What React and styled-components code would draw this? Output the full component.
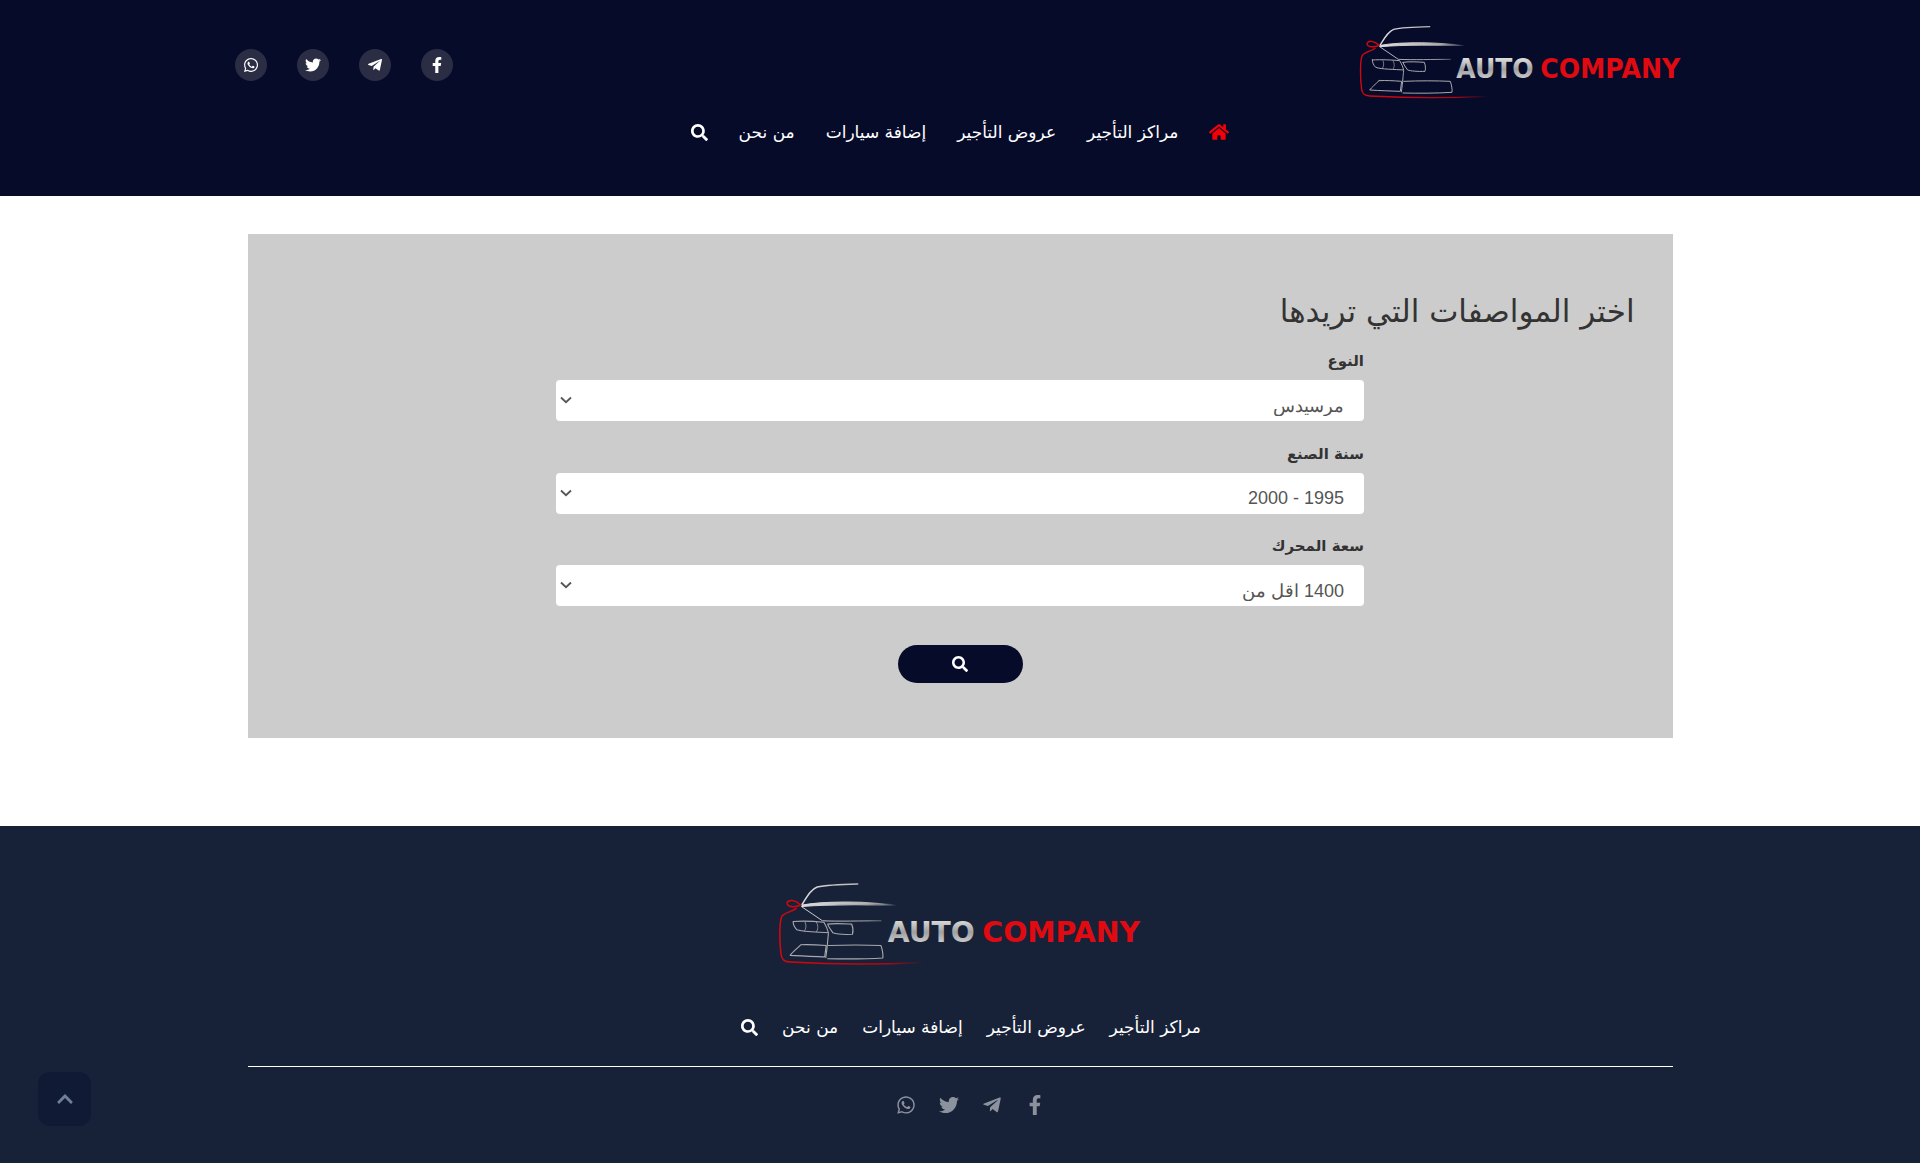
import React from "react";
import styled, { createGlobalStyle } from "styled-components";
import {
  FaWhatsapp,
  FaTwitter,
  FaTelegramPlane,
  FaFacebookF,
  FaHome,
  FaSearch,
  FaChevronUp,
} from "react-icons/fa";

const GlobalStyle = createGlobalStyle`
  html, body { margin: 0; padding: 0; background: #fff; }
  body { font-family: "DejaVu Sans", "Liberation Sans", sans-serif; direction: rtl; }
  * { box-sizing: border-box; }
`;

const socials = [
  { name: "facebook", icon: <FaFacebookF /> },
  { name: "telegram", icon: <FaTelegramPlane /> },
  { name: "twitter", icon: <FaTwitter /> },
  { name: "whatsapp", icon: <FaWhatsapp /> },
];

const links = ["مراكز التأجير", "عروض التأجير", "إضافة سيارات", "من نحن"];

const fields = [
  { label: "النوع", value: "مرسيدس" },
  { label: "سنة الصنع", value: "1995 - 2000" },
  { label: "سعة المحرك", value: "1400 اقل من" },
];

const Logo = ({ id, width }) => (
  <LogoSvg viewBox="55 40 975 225" $width={width} aria-label="Auto Company">
    <defs>
      <linearGradient id={`${id}-silver`} x1="0" y1="0" x2="0" y2="1">
        <stop offset="0" stopColor="#f4f4f4" />
        <stop offset="0.5" stopColor="#a0a0a0" />
        <stop offset="1" stopColor="#e6e6e6" />
      </linearGradient>
      <linearGradient id={`${id}-fade`} gradientUnits="userSpaceOnUse" x1="110" y1="0" x2="375" y2="0">
        <stop offset="0" stopColor="#e0e0e0" />
        <stop offset="0.7" stopColor="#b0b0b0" />
        <stop offset="1" stopColor="#b0b0b0" stopOpacity="0" />
      </linearGradient>
      <linearGradient id={`${id}-red`} gradientUnits="userSpaceOnUse" x1="60" y1="0" x2="445" y2="0">
        <stop offset="0" stopColor="#d8060c" />
        <stop offset="0.75" stopColor="#b00610" />
        <stop offset="1" stopColor="#b00610" stopOpacity="0" />
      </linearGradient>
    </defs>
    <g fill="none" strokeLinecap="round" strokeLinejoin="round">
      <path
        d="M118 104 C104 90 86 88 82 98 C80 108 100 112 118 104 M106 113 C96 122 74 124 68 134 C60 150 62 210 66 236 C68 250 74 255 90 256 C200 262 340 262 442 257"
        stroke={`url(#${id}-red)`}
        strokeWidth="4"
      />
      <path d="M122 102 C136 80 146 62 162 56 C190 50 230 49 270 48" stroke={`url(#${id}-fade)`} strokeWidth="4" />
      <path d="M122 104 C190 92 300 95 375 105 C300 103 190 102 122 108 Z" fill={`url(#${id}-fade)`} stroke={`url(#${id}-fade)`} strokeWidth="3" />
      <path d="M120 108 L176 146 C220 148 280 146 332 146" stroke={`url(#${id}-fade)`} strokeWidth="2.5" />
      <g stroke="#a9a9ad" strokeWidth="3">
        <path d="M98 148 C125 146 160 148 180 150 C186 160 190 170 192 178 C165 176 125 176 108 170 C102 164 98 156 98 148 Z" />
        <path d="M130 150 C134 160 132 168 128 173 M160 150 C166 160 164 170 160 175" strokeWidth="2" />
        <path d="M190 155 C210 152 235 154 254 155 C258 165 258 175 256 182 C235 183 212 181 204 178 C198 170 192 162 190 155 Z" />
        <path d="M192 180 C190 195 190 210 185 244" />
        <path d="M118 210 C106 222 96 230 90 238 C120 240 155 241 182 242 L186 212 C160 210 140 209 118 210" />
        <path d="M192 212 C240 210 290 210 332 212 C336 224 338 235 337 245 C290 248 235 248 190 247" />
      </g>
    </g>
    <LogoWord x="350" y="203" textLength="232" lengthAdjust="spacingAndGlyphs" fill={`url(#${id}-silver)`}>
      AUTO
    </LogoWord>
    <LogoWord x="602" y="203" textLength="420" lengthAdjust="spacingAndGlyphs" fill="#e00a10">
      COMPANY
    </LogoWord>
  </LogoSvg>
);

const Chevron = () => (
  <ChevronSvg viewBox="0 0 12 8">
    <path d="M1 1.5 L6 6.2 L11 1.5" fill="none" stroke="currentColor" strokeWidth="1.8" />
  </ChevronSvg>
);

const App = () => {
  return (
    <>
      <GlobalStyle />
      <Header>
        <HeaderTop>
          <Logo id="head" width={325} />
          <SocialRow>
            {socials.map((s) => (
              <SocialCircle key={s.name} aria-label={s.name}>
                {s.icon}
              </SocialCircle>
            ))}
          </SocialRow>
        </HeaderTop>
        <Nav $gap={31} $top={18}>
          <HomeLink aria-label="home">
            <FaHome />
          </HomeLink>
          {links.map((l) => (
            <NavLink key={l}>{l}</NavLink>
          ))}
          <NavIcon aria-label="search">
            <FaSearch />
          </NavIcon>
        </Nav>
      </Header>

      <Main>
        <Panel>
          <Title>اختر المواصفات التي تريدها</Title>
          <Form>
            {fields.map((f) => (
              <Field key={f.label}>
                <Label>{f.label}</Label>
                <SelectBox>
                  <Select defaultValue={f.value}>
                    <option value={f.value}>{f.value}</option>
                  </Select>
                  <Chevron />
                </SelectBox>
              </Field>
            ))}
            <SearchButton aria-label="search">
              <FaSearch />
            </SearchButton>
          </Form>
        </Panel>
      </Main>

      <Footer>
        <FooterLogo>
          <Logo id="foot" width={366} />
        </FooterLogo>
        <Nav $gap={24} $shift={22}>
          {links.map((l) => (
            <NavLink key={l}>{l}</NavLink>
          ))}
          <NavIcon aria-label="search">
            <FaSearch />
          </NavIcon>
        </Nav>
        <Divider />
        <FooterSocial>
          {socials.map((s) => (
            <FooterIcon key={s.name} aria-label={s.name}>
              {s.icon}
            </FooterIcon>
          ))}
        </FooterSocial>
        <BackToTop aria-label="back to top">
          <FaChevronUp />
        </BackToTop>
      </Footer>
    </>
  );
};

const Header = styled.header`
  height: 196px;
  background: #070b2a;
  padding-top: 24px;
`;
const HeaderTop = styled.div`
  width: 1450px;
  margin: 0 auto;
  padding-right: 2px;
  display: flex;
  justify-content: space-between;
  align-items: flex-start;
`;
const LogoSvg = styled.svg`
  display: block;
  width: ${(p) => p.$width}px;
`;
const LogoWord = styled.text`
  font-family: "DejaVu Sans", sans-serif;
  font-weight: 700;
  font-size: 77px;
  direction: ltr;
`;
const SocialRow = styled.div`
  display: flex;
  gap: 30px;
  margin-top: 25px;
`;
const SocialCircle = styled.a`
  width: 32px;
  height: 32px;
  border-radius: 50%;
  background: #2b2d44;
  color: #fff;
  font-size: 16px;
  display: flex;
  align-items: center;
  justify-content: center;
`;
const Nav = styled.nav`
  display: flex;
  justify-content: center;
  align-items: center;
  gap: ${(p) => p.$gap}px;
  margin-top: ${(p) => p.$top || 0}px;
  padding-left: ${(p) => p.$shift || 0}px;
  color: #fff;
  height: 30px;
`;
const NavLink = styled.a`
  font-size: 17px;
  color: #fff;
  white-space: nowrap;
`;
const NavIcon = styled.a`
  font-size: 17px;
  display: flex;
  color: #fff;
`;
const HomeLink = styled(NavIcon)`
  color: #f40007;
  font-size: 20px;
`;
const Main = styled.main`
  padding: 38px 0 88px;
`;
const Panel = styled.section`
  width: 1425px;
  height: 504px;
  margin: 0 auto;
  background: #ccc;
  padding: 57px 38px 0;
`;
const Title = styled.h2`
  margin: 0 0 18px;
  font-size: 31px;
  line-height: 40px;
  font-weight: 400;
  color: #333;
`;
const Form = styled.form`
  width: 808px;
  margin: 0 auto;
  display: flex;
  flex-direction: column;
`;
const Field = styled.div`
  margin-bottom: 10.5px;
  height: 82px;
`;
const Label = styled.label`
  display: block;
  font-size: 15px;
  font-weight: 700;
  line-height: 24px;
  margin-bottom: 7px;
  color: #333;
`;
const SelectBox = styled.div`
  position: relative;
  height: 41px;
`;
const Select = styled.select`
  width: 100%;
  height: 41px;
  border: 0;
  border-radius: 4px;
  background: #fff;
  appearance: none;
  padding: 10px 20px 0;
  font-family: "Liberation Sans", sans-serif;
  font-size: 18px;
  color: #555;
  direction: rtl;
`;
const ChevronSvg = styled.svg`
  position: absolute;
  left: 4px;
  top: 16px;
  width: 12px;
  height: 8px;
  color: #555;
`;
const SearchButton = styled.button`
  width: 125px;
  height: 38px;
  margin: 18px auto 0;
  border: 0;
  border-radius: 19px;
  background: #070b2a;
  color: #fff;
  font-size: 16px;
  display: flex;
  align-items: center;
  justify-content: center;
`;
const Footer = styled.footer`
  position: relative;
  height: 337px;
  background: #172239;
  padding-top: 55px;
`;
const FooterLogo = styled.div`
  display: flex;
  justify-content: center;
  margin-bottom: 47px;
`;
const Divider = styled.hr`
  width: 1425px;
  margin: 24px auto 0;
  border: 0;
  border-top: 1px solid #fff;
`;
const FooterSocial = styled.div`
  display: flex;
  justify-content: center;
  gap: 23px;
  margin-top: 28px;
  padding-left: 20px;
`;
const FooterIcon = styled.a`
  font-size: 20px;
  color: #8b919d;
  display: flex;
  width: 20px;
  justify-content: center;
`;
const BackToTop = styled.a`
  position: absolute;
  left: 38px;
  top: 246px;
  width: 53px;
  height: 54px;
  border-radius: 12px;
  background: #101a35;
  color: #6f7f99;
  font-size: 18px;
  display: flex;
  align-items: center;
  justify-content: center;
`;

export default App;
